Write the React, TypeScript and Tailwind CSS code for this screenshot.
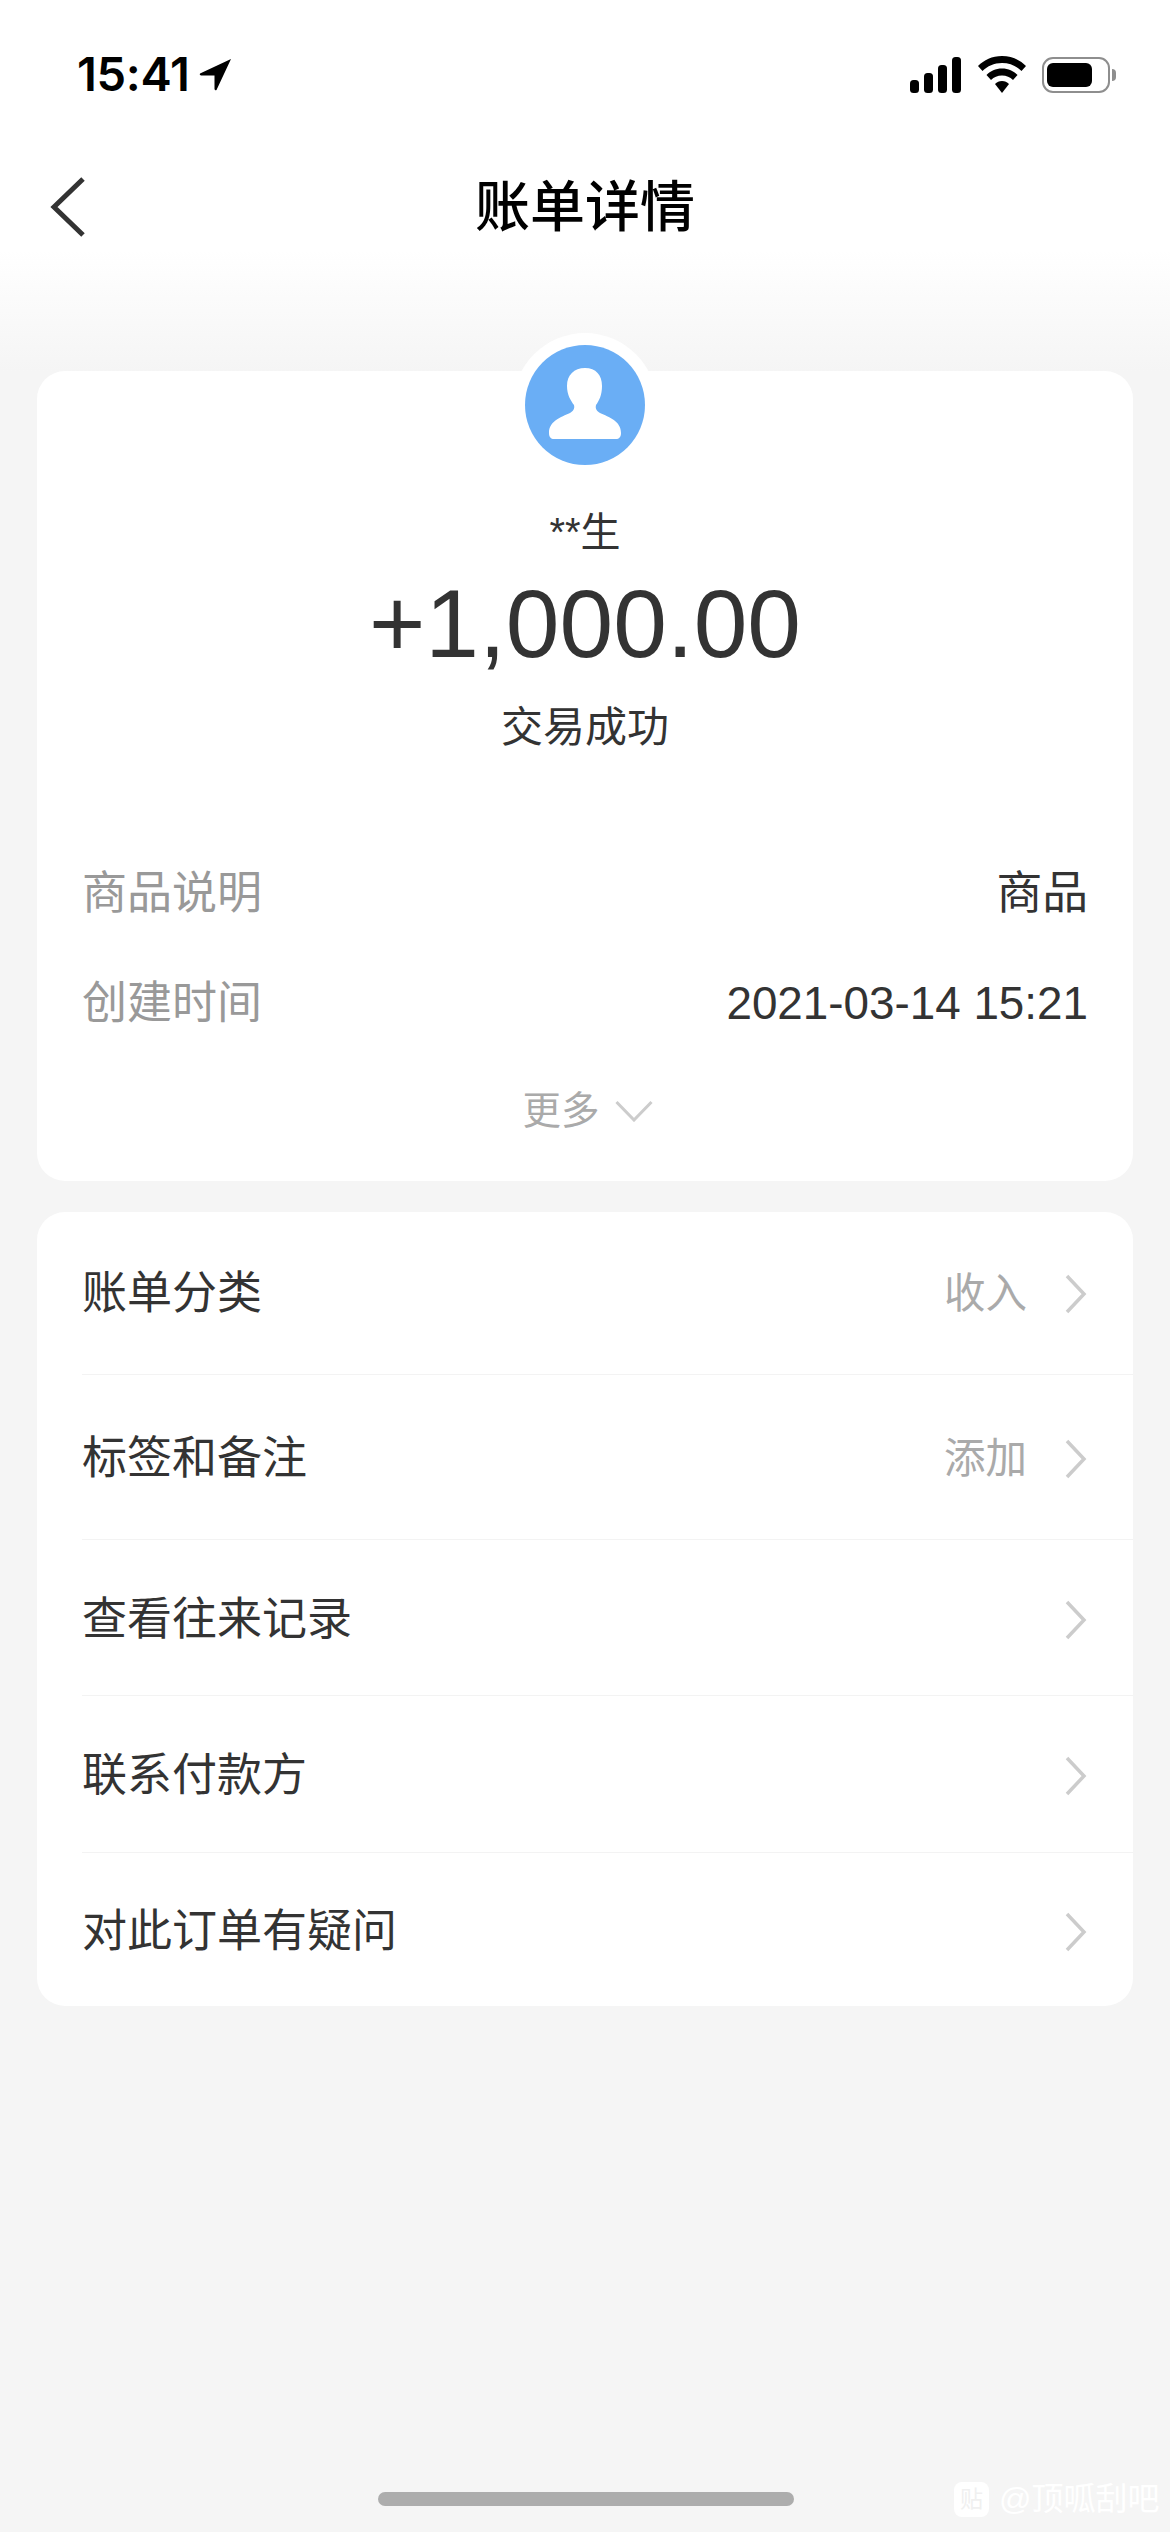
const FONT = "font-['Liberation_Sans','Noto_Sans_CJK_SC',sans-serif]";

const details = [
  { label: "商品说明", value: "商品", className: "mt-[106px]" },
  { label: "创建时间", value: "2021-03-14 15:21", className: "mt-[50px]" },
];

const rows = [
  { label: "账单分类", hint: "收入", height: "h-[163px]", pt: "pt-[1px]" },
  { label: "标签和备注", hint: "添加", height: "h-[165px]", pt: "pt-[3px]" },
  { label: "查看往来记录", height: "h-[156px]", pt: "pt-[4px]" },
  { label: "联系付款方", height: "h-[157px]", pt: "pt-[3px]" },
  { label: "对此订单有疑问", height: "h-[153px]", pt: "pt-[4px]" },
];

function StatusBar() {
  return (
    <div className="flex h-[147px] items-start justify-between pl-[77px] pr-[54px] pt-[50px]">
      <div className="flex items-center gap-[9px]">
        <span className="font-['Inter',sans-serif] text-[47px] leading-[47px] font-semibold tracking-[-0.3px] text-black">
          15:41
        </span>
        <svg width="33" height="33" viewBox="0 0 33 33" className="mt-[1px]">
          <path d="M32 1 L1 15.5 Q0 17 2 17.5 L15.5 17.5 L15.5 31 Q16 33 17.5 32 Z" fill="#000" />
        </svg>
      </div>
      <div className="flex items-center pt-[6px]">
        <svg width="52" height="36" viewBox="0 0 52 36" className="mr-[17px]">
          <rect x="0" y="23" width="9" height="13" rx="3.5" fill="#000" />
          <rect x="14" y="16" width="9" height="20" rx="3.5" fill="#000" />
          <rect x="28" y="8" width="9" height="28" rx="3.5" fill="#000" />
          <rect x="42" y="0" width="9" height="36" rx="3.5" fill="#000" />
        </svg>
        <svg width="50" height="38" viewBox="0 0 50 38" className="mr-[15px] -ml-[2px]">
          <path d="M25 0 C15 0 7 4 1 10 L5.5 15 C10.5 10 17 7 25 7 C33 7 39.500 10 44.500 15 L49 10 C43 4 35 0 25 0 Z" fill="#000" />
          <path d="M25 12.500 C18.500 12.500 13.500 15 9.500 19 L14 24 C17 21 20.500 19.500 25 19.500 C29.500 19.500 33 21 36 24 L40.500 19 C36.500 15 31.500 12.500 25 12.500 Z" fill="#000" />
          <path d="M25 25 C22 25 20 26 18 28 L25 37 L32 28 C30 26 28 25 25 25 Z" fill="#000" />
        </svg>
        <div className="flex items-center">
          <div className="flex h-[36px] w-[68px] items-center rounded-[11px] border-[2.5px] border-[#8e8e8e] pl-[3px]">
            <div className="h-[24px] w-[45px] rounded-[6px] bg-black" />
          </div>
          <div className="ml-[2px] h-[12px] w-[4px] rounded-r-full bg-[#8e8e8e]" />
        </div>
      </div>
    </div>
  );
}

function NavBar() {
  return (
    <div className="relative flex h-[120px] items-center justify-center">
      <svg width="40" height="60" viewBox="0 0 40 60" className="absolute left-[47px] top-[30px]">
        <path d="M36 2 L7 30 L36 58" fill="none" stroke="#333" strokeWidth="5" />
      </svg>
      <span className="text-[55px] leading-[70px] font-medium text-black">账单详情</span>
    </div>
  );
}

function Avatar() {
  return (
    <div className="-mt-[38px] h-[144px] w-[144px] rounded-full bg-white p-[12px]">
      <div className="h-[120px] w-[120px] rounded-full bg-[#6aaef5]">
        <svg width="120" height="120" viewBox="0 0 120 120">
          <path
            d="M60 23 C49 23 42 30 42 41 C42 50 46 56 49 60 C50 64 48 66 45 68 C36 72 24 76 24 88 C24 92 26 94 29 94 L91 94 C94 94 96 92 96 88 C96 76 84 72 75 68 C72 66 70 64 71 60 C74 56 77 50 77 41 C77 30 71 23 60 23 Z"
            fill="#fff"
          />
        </svg>
      </div>
    </div>
  );
}

export default function App() {
  return (
    <div className={`${FONT} relative flex h-[2532px] w-[1170px] flex-col overflow-hidden bg-[linear-gradient(#fff_250px,#f5f5f5_371px)]`}>
      <StatusBar />
      <NavBar />
      <div className="h-[104px]" />

      <section className="mx-[37px] flex h-[810px] flex-col items-stretch rounded-[28px] bg-white px-[45px]">
        <div className="flex flex-col items-center">
          <Avatar />
          <p className="mt-[27px] text-[40px] leading-[56px] text-[#333]">**生</p>
          <p className="mt-[9px] text-[96.5px] leading-[110px] text-[#333]">+1,000.00</p>
          <p className="mt-[19px] text-[42px] leading-[60px] text-[#333]">交易成功</p>
        </div>
        {details.map((d) => (
          <div key={d.label} className={`${d.className} flex h-[60px] items-center justify-between`}>
            <span className="text-[45px] leading-[60px] text-[#999]">{d.label}</span>
            <span className="text-[45.8px] leading-[60px] text-[#333]">{d.value}</span>
          </div>
        ))}
        <div className="mt-[47px] flex h-[60px] items-center justify-center gap-[15px] pl-[5px]">
          <span className="text-[38.5px] leading-[60px] text-[#aaa]">更多</span>
          <svg width="38" height="22" viewBox="0 0 38 22">
            <path d="M1.500 2 L19 20 L36.500 2" fill="none" stroke="#ccc" strokeWidth="3" />
          </svg>
        </div>
      </section>

      <section className="mx-[37px] mt-[31px] flex flex-col rounded-[28px] bg-white pl-[45px]">
        {rows.map((row, i) => (
          <div
            key={row.label}
            className={`${row.height} ${row.pt} flex items-center justify-between pr-[45px] ${i < rows.length - 1 ? "border-b border-[#f3f3f3]" : ""}`}
          >
            <span className="text-[45px] leading-[60px] text-[#333]">{row.label}</span>
            <span className="flex items-center gap-[37px]">
              {row.hint && <span className="text-[41.5px] leading-[60px] text-[#aaa]">{row.hint}</span>}
              <svg width="24" height="42" viewBox="0 0 24 42">
                <path d="M3 3 L20 21 L3 39" fill="none" stroke="#ccc" strokeWidth="3.500" />
              </svg>
            </span>
          </div>
        ))}
      </section>

      <div className="absolute left-[378px] top-[2492px] h-[14px] w-[416px] rounded-full bg-[#adadad]" />

      <div className="absolute left-[954px] top-[2482px] flex items-center gap-[10px]">
        <div className="flex h-[35px] w-[35px] items-center justify-center rounded-[8px] bg-white text-[23px] leading-none text-[#f0f0f0]">
          贴
        </div>
        <span className="text-[32px] leading-[35px] text-white">@顶呱刮吧</span>
      </div>
    </div>
  );
}
